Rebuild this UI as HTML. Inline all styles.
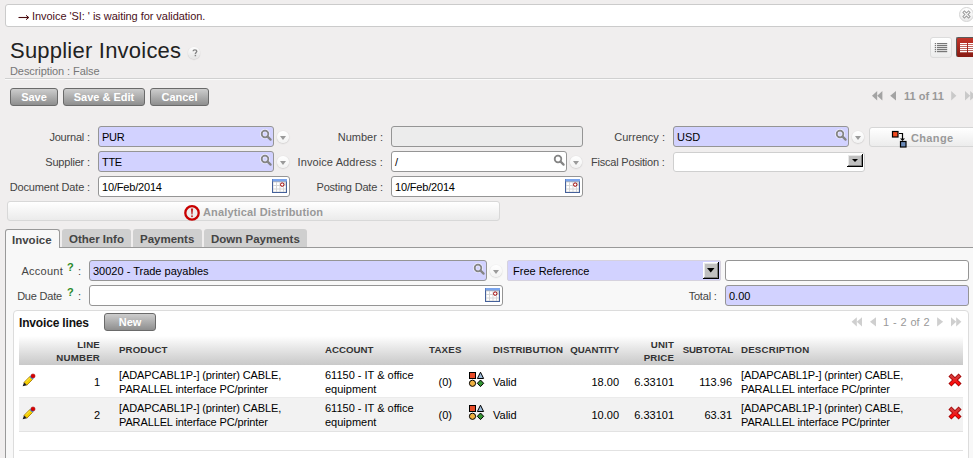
<!DOCTYPE html>
<html><head><meta charset="utf-8">
<style>
*{box-sizing:border-box;margin:0;padding:0}
html,body{width:973px;height:458px;overflow:hidden;background:#f0eeee;font-family:"Liberation Sans",sans-serif;color:#000}
.a{position:absolute}
.t11{font-size:11px;line-height:13px;white-space:nowrap}
.t12{font-size:12px;line-height:14px;white-space:nowrap}
.lbl{color:#444;text-align:right}
.inp{position:absolute;height:21px;border:1px solid #959595;border-radius:3px;background:#fff}
.req{background:#d2d2ff}
.ro{background:#ececec}
.btn{position:absolute;height:18px;border:1px solid #6a6a6a;border-radius:3px;background:linear-gradient(#cdcdcd,#8e8e8e);color:#fff;font-weight:bold;font-size:11px;line-height:16px;text-align:center}
.dd{position:absolute;width:12px;height:12px;border-radius:50%;background:linear-gradient(#ffffff,#f2f2f2);box-shadow:0 0.5px 1.5px rgba(0,0,0,0.22)}
.dd:after{content:"";position:absolute;left:3px;top:4.5px;border-left:3px solid transparent;border-right:3px solid transparent;border-top:4px solid #9a9a9a}
.tab{position:absolute;top:229px;height:18px;background:#cfcfcf;border-radius:3px 3px 0 0;color:#444;font-weight:bold;font-size:11.5px;line-height:20px;padding-left:7px;white-space:nowrap}
.hd{position:absolute;font-weight:bold;font-size:9.7px;line-height:12.3px;color:#333;white-space:nowrap}
.cell{position:absolute;font-size:11px;line-height:13.5px;white-space:nowrap}
</style></head><body>

<!-- notification -->
<div class="a" style="left:5px;top:4px;width:980px;height:23px;background:#fff;border:1px solid #cbcbcb;border-radius:3px"></div>
<div class="a t11" style="left:32px;top:10px;color:#4a1020;letter-spacing:-0.05px">Invoice 'SI: ' is waiting for validation.</div>
<div class="a" style="left:959px;top:7px;width:15px;height:15px;border-radius:50%;border:1px solid #d4d4d4;background:linear-gradient(#fff,#eaeaea)"></div>

<!-- title -->
<div class="a" style="left:10px;top:38px;font-size:22px;line-height:26px;color:#222;white-space:nowrap;letter-spacing:0.22px">Supplier Invoices</div>
<div class="a" style="left:188px;top:47px;width:12px;height:12px;border-radius:50%;background:linear-gradient(#fdfdfd,#e4e4e4);box-shadow:0 0.5px 1.2px rgba(0,0,0,0.2)"></div><svg class="a" style="left:191.5px;top:48.6px" width="6" height="8" viewBox="0 0 7 9"><path d="M1.3 2.6C1.3 1.2 2.2 0.8 3.4 0.8C4.7 0.8 5.6 1.5 5.6 2.6C5.6 3.9 3.9 4 3.9 5.6" fill="none" stroke="#858585" stroke-width="1.6"/><rect x="3.1" y="6.6" width="1.7" height="1.7" fill="#858585"/></svg>
<div class="a t11" style="left:10px;top:65px;color:#777;letter-spacing:-0.08px">Description : False</div>
<div class="a" style="left:5px;top:78px;width:968px;height:1px;background:#d0d0d0"></div><div class="a" style="left:5px;top:79px;width:968px;height:1px;background:#fafafa"></div>

<!-- view switch -->
<div class="a" style="left:930px;top:37px;width:22px;height:21px;border:1px solid #dcdcdc;border-radius:3px;background:linear-gradient(#fff,#ececec)"></div>
<div class="a" style="left:956px;top:37px;width:20px;height:20px;border-radius:2px;background:linear-gradient(#c4352a,#861a12);border-left:1px solid #5a5a5a;border-top:1px solid #5a5a5a"></div>

<!-- buttons -->
<div class="btn" style="left:10px;top:88px;width:48px">Save</div>
<div class="btn" style="left:63px;top:88px;width:82px">Save &amp; Edit</div>
<div class="btn" style="left:150px;top:88px;width:59px">Cancel</div>

<!-- pager -->
<div class="a t11" style="left:904px;top:90px;color:#999;font-weight:bold">11 of 11</div>

<!-- row 1 -->
<div class="a t11 lbl" style="left:0;width:89.8px;top:131px;letter-spacing:-0.2px">Journal :</div>
<div class="inp req" style="left:98px;top:126px;width:176px"></div>
<div class="a t11" style="left:102px;top:131px;letter-spacing:-0.3px">PUR</div>
<div class="dd" style="left:277px;top:131px"></div>
<div class="a t11 lbl" style="left:290px;width:93px;top:131px">Number :</div>
<div class="inp ro" style="left:391px;top:126px;width:192px"></div>
<div class="a t11 lbl" style="left:580px;width:85px;top:131px">Currency :</div>
<div class="inp req" style="left:673px;top:126px;width:176px"></div>
<div class="a t11" style="left:677px;top:131px">USD</div>
<div class="dd" style="left:852px;top:131px"></div>
<div class="a" style="left:869px;top:127px;width:120px;height:20px;border:1px solid #d6d6d6;border-radius:3px;background:linear-gradient(#fff,#ececec)"></div>
<div class="a t11" style="left:911px;top:132px;color:#999;font-weight:bold;letter-spacing:0.35px">Change</div>

<!-- row 2 -->
<div class="a t11 lbl" style="left:0;width:89.8px;top:156px;letter-spacing:-0.2px">Supplier :</div>
<div class="inp req" style="left:98px;top:151px;width:176px"></div>
<div class="a t11" style="left:102px;top:156px;letter-spacing:-0.3px">TTE</div>
<div class="dd" style="left:277px;top:156px"></div>
<div class="a t11 lbl" style="left:290px;width:93px;top:156px;letter-spacing:0.1px">Invoice Address :</div>
<div class="inp" style="left:391px;top:151px;width:176px"></div>
<div class="a t11" style="left:395px;top:156px">/</div>
<div class="dd" style="left:570px;top:156px"></div>
<div class="a t11 lbl" style="left:580px;width:84.6px;top:156px;letter-spacing:-0.2px">Fiscal Position :</div>
<div class="inp" style="left:673px;top:152px;width:192px;height:20px;border-color:#cfcfcf"></div>

<!-- row 3 -->
<div class="a t11 lbl" style="left:0;width:90px;top:181px;letter-spacing:-0.15px">Document Date :</div>
<div class="inp" style="left:98px;top:176px;width:192px"></div>
<div class="a t11" style="left:102px;top:181px;letter-spacing:-0.18px">10/Feb/2014</div>
<div class="a t11 lbl" style="left:290px;width:92.8px;top:181px;letter-spacing:-0.2px">Posting Date :</div>
<div class="inp" style="left:391px;top:176px;width:192px"></div>
<div class="a t11" style="left:395px;top:181px;letter-spacing:-0.18px">10/Feb/2014</div>

<!-- analytical -->
<div class="a" style="left:7px;top:201px;width:493px;height:20px;border:1px solid #d8d8d8;border-radius:3px;background:linear-gradient(#fff,#ebebeb)"></div>
<svg class="a" style="left:184px;top:205px" width="16" height="16" viewBox="0 0 16 16"><circle cx="8" cy="7.9" r="6.7" fill="#ededed" stroke="#c80000" stroke-width="2.3"/><path d="M6.9 3.6H9.1L8.5 9.6H7.5Z" fill="#c02020"/><rect x="7.2" y="10.4" width="1.6" height="1.7" fill="#c02020"/></svg>
<div class="a t11" style="left:203px;top:206px;color:#999;font-weight:bold;letter-spacing:0.15px">Analytical Distribution</div>

<!-- tabs -->
<div class="a" style="left:5px;top:247px;width:980px;height:220px;background:#f8f8f8;border-left:1px solid #999;border-top:1px solid #999"></div>
<div class="tab" style="left:5px;width:55px;height:19px;background:#f8f8f8;border:1px solid #999;border-bottom:none;line-height:20px;padding-left:6px">Invoice</div>
<div class="tab" style="left:62px;width:69px">Other Info</div>
<div class="tab" style="left:133px;width:69px">Payments</div>
<div class="tab" style="left:204px;width:103px">Down Payments</div>

<!-- account row -->
<div class="a t11 lbl" style="left:0;width:63px;top:265px;letter-spacing:0.25px">Account</div>
<div class="a t11" style="left:67px;top:261px;color:#2a8a2a;font-weight:bold">?</div>
<div class="a t11" style="left:78px;top:265px;color:#444">:</div>
<div class="inp req" style="left:89px;top:260px;width:398px"></div>
<div class="a t11" style="left:93px;top:265px">30020 - Trade payables</div>
<div class="dd" style="left:490px;top:265px"></div>
<div class="inp req" style="left:507px;top:260px;width:214px;border-color:#d6d2de;border-radius:2px"></div>
<div class="a t11" style="left:513px;top:265px">Free Reference</div>
<div class="inp" style="left:725px;top:260px;width:244px"></div>

<div class="a t11 lbl" style="left:0;width:62px;top:290px;letter-spacing:-0.2px">Due Date</div>
<div class="a t11" style="left:67px;top:286px;color:#2a8a2a;font-weight:bold">?</div>
<div class="a t11" style="left:78px;top:290px;color:#444">:</div>
<div class="inp" style="left:89px;top:285px;width:414px"></div>
<div class="a t11 lbl" style="left:650px;width:66.6px;top:290px;letter-spacing:-0.2px">Total :</div>
<div class="inp req" style="left:725px;top:285px;width:244px"></div>
<div class="a t11" style="left:729px;top:290px">0.00</div>

<!-- invoice lines -->
<div class="a" style="left:13px;top:310px;width:956px;height:160px;background:#fff;border:1px solid #dcdcdc;border-radius:4px"></div>
<div class="a t12" style="left:19px;top:316px;font-weight:bold;color:#111;letter-spacing:-0.17px">Invoice lines</div>
<div class="btn" style="left:104px;top:313px;width:52px;height:18px">New</div>
<div class="a t11" style="left:883px;top:316px;color:#999;word-spacing:0.8px">1 - 2 of 2</div>

<div class="a" style="left:19px;top:336px;width:944px;height:29px;background:linear-gradient(#ffffff 0%,#eeeeee 30%,#d8d8d8 70%,#c9c9c9 100%)"></div>
<div class="a" style="left:19px;top:365px;width:944px;height:33px;background:#fff;border-bottom:1px solid #ebebeb"></div>
<div class="a" style="left:19px;top:398px;width:944px;height:34px;background:#f2f2f2;border-bottom:1px solid #e2e2e2"></div>
<div class="a" style="left:19px;top:450px;width:944px;height:1px;background:#e2e2e2"></div>

<!-- icons -->
<svg class="a" style="left:260px;top:129px" width="13" height="13" viewBox="0 0 13 13"><circle cx="5" cy="5" r="3.4" fill="none" stroke="#fff" stroke-width="3.4" opacity="0.6"/><circle cx="5" cy="5" r="3.3" fill="none" stroke="#858585" stroke-width="1.8"/><path d="M7.6 7.6 L10.6 10.6" stroke="#858585" stroke-width="2.2" stroke-linecap="round"/></svg><svg class="a" style="left:260px;top:154px" width="13" height="13" viewBox="0 0 13 13"><circle cx="5" cy="5" r="3.4" fill="none" stroke="#fff" stroke-width="3.4" opacity="0.6"/><circle cx="5" cy="5" r="3.3" fill="none" stroke="#858585" stroke-width="1.8"/><path d="M7.6 7.6 L10.6 10.6" stroke="#858585" stroke-width="2.2" stroke-linecap="round"/></svg><svg class="a" style="left:553px;top:154px" width="13" height="13" viewBox="0 0 13 13"><circle cx="5" cy="5" r="3.4" fill="none" stroke="#fff" stroke-width="3.4" opacity="0.6"/><circle cx="5" cy="5" r="3.3" fill="none" stroke="#858585" stroke-width="1.8"/><path d="M7.6 7.6 L10.6 10.6" stroke="#858585" stroke-width="2.2" stroke-linecap="round"/></svg><svg class="a" style="left:835px;top:129px" width="13" height="13" viewBox="0 0 13 13"><circle cx="5" cy="5" r="3.4" fill="none" stroke="#fff" stroke-width="3.4" opacity="0.6"/><circle cx="5" cy="5" r="3.3" fill="none" stroke="#858585" stroke-width="1.8"/><path d="M7.6 7.6 L10.6 10.6" stroke="#858585" stroke-width="2.2" stroke-linecap="round"/></svg><svg class="a" style="left:473px;top:263px" width="13" height="13" viewBox="0 0 13 13"><circle cx="5" cy="5" r="3.4" fill="none" stroke="#fff" stroke-width="3.4" opacity="0.6"/><circle cx="5" cy="5" r="3.3" fill="none" stroke="#858585" stroke-width="1.8"/><path d="M7.6 7.6 L10.6 10.6" stroke="#858585" stroke-width="2.2" stroke-linecap="round"/></svg><svg class="a" style="left:272px;top:179px" width="15" height="14" viewBox="0 0 15 14"><rect x="0" y="0" width="15" height="14" fill="#44609a"/><rect x="0.5" y="0" width="14.5" height="2.5" fill="#7aa4ec"/><rect x="1" y="2.5" width="13" height="10.5" fill="#d6d6d6"/><path d="M1.5 3.5h2.5v2.5h-2.5zM5 3.5h2.5v2.5h-2.5zM8.5 3.5h2.5v2.5h-2.5zM1.5 7h2.5v2.5h-2.5zM5 7h2.5v2.5h-2.5zM8.5 7h2.5v2.5h-2.5zM12 7h1.5v2.5h-1.5zM1.5 10.5h2.5v2h-2.5zM5 10.5h2.5v2h-2.5zM8.5 10.5h2.5v2h-2.5zM12 10.5h1.5v2h-1.5z" fill="#fff"/><circle cx="10.2" cy="5.6" r="1.7" fill="#fff" stroke="#a00000" stroke-width="1"/></svg><svg class="a" style="left:565px;top:179px" width="15" height="14" viewBox="0 0 15 14"><rect x="0" y="0" width="15" height="14" fill="#44609a"/><rect x="0.5" y="0" width="14.5" height="2.5" fill="#7aa4ec"/><rect x="1" y="2.5" width="13" height="10.5" fill="#d6d6d6"/><path d="M1.5 3.5h2.5v2.5h-2.5zM5 3.5h2.5v2.5h-2.5zM8.5 3.5h2.5v2.5h-2.5zM1.5 7h2.5v2.5h-2.5zM5 7h2.5v2.5h-2.5zM8.5 7h2.5v2.5h-2.5zM12 7h1.5v2.5h-1.5zM1.5 10.5h2.5v2h-2.5zM5 10.5h2.5v2h-2.5zM8.5 10.5h2.5v2h-2.5zM12 10.5h1.5v2h-1.5z" fill="#fff"/><circle cx="10.2" cy="5.6" r="1.7" fill="#fff" stroke="#a00000" stroke-width="1"/></svg><svg class="a" style="left:485px;top:288px" width="15" height="14" viewBox="0 0 15 14"><rect x="0" y="0" width="15" height="14" fill="#44609a"/><rect x="0.5" y="0" width="14.5" height="2.5" fill="#7aa4ec"/><rect x="1" y="2.5" width="13" height="10.5" fill="#d6d6d6"/><path d="M1.5 3.5h2.5v2.5h-2.5zM5 3.5h2.5v2.5h-2.5zM8.5 3.5h2.5v2.5h-2.5zM1.5 7h2.5v2.5h-2.5zM5 7h2.5v2.5h-2.5zM8.5 7h2.5v2.5h-2.5zM12 7h1.5v2.5h-1.5zM1.5 10.5h2.5v2h-2.5zM5 10.5h2.5v2h-2.5zM8.5 10.5h2.5v2h-2.5zM12 10.5h1.5v2h-1.5z" fill="#fff"/><circle cx="10.2" cy="5.6" r="1.7" fill="#fff" stroke="#a00000" stroke-width="1"/></svg><svg class="a" style="left:847px;top:154px" width="16" height="13" viewBox="0 0 16 13"><rect x="0" y="0" width="16" height="13" fill="#000"/><rect x="0" y="0" width="15" height="12" fill="#fff"/><rect x="1" y="1" width="14" height="11" fill="#808080"/><rect x="1" y="1" width="13" height="10" fill="#e8e8e8"/><rect x="2" y="2" width="12" height="9" fill="#c0c0c0"/><path d="M5 5H11L8 8Z" fill="#000"/></svg><svg class="a" style="left:703px;top:262px" width="16" height="17" viewBox="0 0 16 17"><rect x="0" y="0" width="16" height="17" fill="#000"/><rect x="0" y="0" width="15" height="16" fill="#fff"/><rect x="1" y="1" width="14" height="15" fill="#808080"/><rect x="1" y="1" width="13" height="14" fill="#e8e8e8"/><rect x="2" y="2" width="12" height="13" fill="#c0c0c0"/><path d="M4 6H11.5L7.75 10.5Z" fill="#000"/></svg><svg class="a" style="left:891px;top:130px" width="17" height="18" viewBox="0 0 17 18"><rect x="1.5" y="1.5" width="5.5" height="5.5" fill="#f04a20" stroke="#000" stroke-width="1.2"/><path d="M8 3.5H11.5V9" fill="none" stroke="#000" stroke-width="1.2"/><path d="M9 8.5H14L11.5 11Z" fill="#000"/><rect x="9.5" y="11.5" width="5.5" height="5.5" fill="#6a8ab8" stroke="#000" stroke-width="1.2"/></svg><svg class="a" style="left:18px;top:13px" width="12" height="8" viewBox="0 0 12 8"><path d="M0.5 4.5H10.5" stroke="#4a0c10" stroke-width="1.1"/><path d="M8 2.3L10.8 4.5L8 6.7" fill="none" stroke="#4a0c10" stroke-width="1"/></svg><svg class="a" style="left:0;top:0" width="973" height="458"><path d="M872 95.8L877.2 91V100.6Z" fill="#a3a3a3"/><path d="M877.2 95.8L882.4000000000001 91V100.6Z" fill="#a3a3a3"/><path d="M890.2 95.8L896.0 91V100.6Z" fill="#a3a3a3"/><path d="M956.4000000000001 95.8L951.2 91V100.6Z" fill="#c9c9c9"/><path d="M970.2 95.8L965 91V100.6Z" fill="#c9c9c9"/><path d="M975.4000000000001 95.8L970.2 91V100.6Z" fill="#c9c9c9"/><path d="M851.6 321.8L856.8000000000001 317.2V326.4Z" fill="#cfcfcf"/><path d="M856.8 321.8L862.0 317.2V326.4Z" fill="#cfcfcf"/><path d="M870 321.8L876 317.2V326.4Z" fill="#cfcfcf"/><path d="M943.1 321.8L937.1 317.2V326.4Z" fill="#cfcfcf"/><path d="M956.2 321.8L951 317.2V326.4Z" fill="#cfcfcf"/><path d="M961.4000000000001 321.8L956.2 317.2V326.4Z" fill="#cfcfcf"/></svg><svg class="a" style="left:962px;top:10px" width="9" height="9" viewBox="0 0 9 9"><path d="M2.4 2.4L6.6 6.6M6.6 2.4L2.4 6.6" stroke="#959595" stroke-width="3" stroke-linecap="square"/><path d="M2.4 2.4L6.6 6.6M6.6 2.4L2.4 6.6" stroke="#f6f6f6" stroke-width="1.3" stroke-linecap="square"/></svg><svg class="a" style="left:934px;top:42px" width="14" height="11" viewBox="0 0 14 11"><rect x="0.8" y="1" width="1.3" height="1.2" fill="#777"/><rect x="3" y="1" width="10.2" height="1.2" fill="#777"/><rect x="0.8" y="3" width="1.3" height="1.2" fill="#777"/><rect x="3" y="3" width="10.2" height="1.2" fill="#777"/><rect x="0.8" y="5" width="1.3" height="1.2" fill="#777"/><rect x="3" y="5" width="10.2" height="1.2" fill="#777"/><rect x="0.8" y="7" width="1.3" height="1.2" fill="#777"/><rect x="3" y="7" width="10.2" height="1.2" fill="#777"/><rect x="0.8" y="9" width="1.3" height="1.2" fill="#777"/><rect x="3" y="9" width="10.2" height="1.2" fill="#777"/></svg><svg class="a" style="left:959px;top:42px" width="14" height="11" viewBox="0 0 14 11"><rect x="1" y="1" width="7" height="1.3" fill="#fff"/><rect x="9" y="1" width="5" height="1.3" fill="#fff"/><rect x="1" y="3" width="7" height="1.3" fill="#fff"/><rect x="9" y="3" width="5" height="1.3" fill="#fff"/><rect x="1" y="5" width="7" height="1.3" fill="#fff"/><rect x="9" y="5" width="5" height="1.3" fill="#fff"/><rect x="1" y="7" width="7" height="1.3" fill="#fff"/><rect x="9" y="7" width="5" height="1.3" fill="#fff"/><rect x="1" y="9" width="7" height="1.3" fill="#fff"/><rect x="9" y="9" width="5" height="1.3" fill="#fff"/></svg>
<!-- table content -->
<div class="hd" style="left:19px;width:81px;top:337.5px;text-align:right;line-height:13px;letter-spacing:0.2px">LINE<br>NUMBER</div>
<div class="hd" style="left:119px;width:200px;top:344px;text-align:left;letter-spacing:0.1px">PRODUCT</div>
<div class="hd" style="left:325px;width:100px;top:344px;text-align:left">ACCOUNT</div>
<div class="hd" style="left:429px;width:60px;top:344px;text-align:left;letter-spacing:0.2px">TAXES</div>
<div class="hd" style="left:493px;width:75px;top:344px;text-align:left;letter-spacing:0.1px">DISTRIBUTION</div>
<div class="hd" style="left:560px;width:59px;top:344px;text-align:right;letter-spacing:-0.1px">QUANTITY</div>
<div class="hd" style="left:620px;width:54px;top:337.5px;text-align:right;line-height:13px;letter-spacing:0.15px">UNIT<br>PRICE</div>
<div class="hd" style="left:681px;width:52px;top:344px;text-align:right;letter-spacing:-0.2px">SUBTOTAL</div>
<div class="hd" style="left:741px;width:120px;top:344px;text-align:left;letter-spacing:0.2px">DESCRIPTION</div>
<svg class="a" style="left:22px;top:373px" width="14" height="14" viewBox="0 0 14 14"><path d="M2 9.4 L7.8 3.6 L10.6 6.4 L4.8 12.2 Z" fill="#f5d000" stroke="#a07000" stroke-width="0.8" stroke-linejoin="round"/><path d="M4 8.6 L8 4.6" stroke="#fff060" stroke-width="0.9"/><path d="M0.7 13.3 L2 9.4 L4.8 12.2 Z" fill="#151515"/><path d="M7.6 3.8 L9.2 2.2 L12 5 L10.4 6.6 Z" fill="#40a0f0"/><circle cx="11" cy="3" r="2.1" fill="#d80000" stroke="#a00000" stroke-width="0.5"/></svg>
<div class="cell" style="left:40px;width:60px;top:376px;text-align:right">1</div>
<div class="cell" style="left:119px;top:369px;letter-spacing:-0.12px">[ADAPCABL1P-] (printer) CABLE,<br>PARALLEL interface PC/printer</div>
<div class="cell" style="left:325px;top:369px">61150 - IT &amp; office<br>equipment</div>
<div class="cell" style="left:400px;width:52px;top:376px;text-align:right">(0)</div>
<svg class="a" style="left:468px;top:371px" width="17" height="16" viewBox="0 0 17 16"><rect x="1.5" y="1.5" width="6" height="6" fill="#e84c28" stroke="#000" stroke-width="1"/><path d="M12.5 1.2 L15.6 7.5 L9.4 7.5 Z" fill="#9cbad8" stroke="#000" stroke-width="1" stroke-linejoin="round"/><circle cx="4.5" cy="12.3" r="3.1" fill="#f0b040" stroke="#000" stroke-width="1"/><path d="M12.5 9 L15.7 12.3 L12.5 15.6 L9.3 12.3 Z" fill="#339433" stroke="#000" stroke-width="1" stroke-linejoin="round"/></svg>
<div class="cell" style="left:493px;top:376px">Valid</div>
<div class="cell" style="left:560px;width:59px;top:376px;text-align:right">18.00</div>
<div class="cell" style="left:620px;width:54px;top:376px;text-align:right">6.33101</div>
<div class="cell" style="left:680px;width:52px;top:376px;text-align:right">113.96</div>
<div class="cell" style="left:741px;top:369px;letter-spacing:-0.12px">[ADAPCABL1P-] (printer) CABLE,<br>PARALLEL interface PC/printer</div>
<svg class="a" style="left:948px;top:373px" width="14" height="14" viewBox="0 0 14 14"><defs><linearGradient id="xg1" x1="0" y1="0" x2="0" y2="1"><stop offset="0" stop-color="#d23c3c"/><stop offset="1" stop-color="#ff0a0a"/></linearGradient></defs><path d="M3.4 3.4L10.6 10.6M10.6 3.4L3.4 10.6" stroke="#a00000" stroke-width="4.2" stroke-linecap="square"/><path d="M3.4 3.4L10.6 10.6M10.6 3.4L3.4 10.6" stroke="url(#xg1)" stroke-width="2.6" stroke-linecap="square"/></svg>
<svg class="a" style="left:22px;top:406px" width="14" height="14" viewBox="0 0 14 14"><path d="M2 9.4 L7.8 3.6 L10.6 6.4 L4.8 12.2 Z" fill="#f5d000" stroke="#a07000" stroke-width="0.8" stroke-linejoin="round"/><path d="M4 8.6 L8 4.6" stroke="#fff060" stroke-width="0.9"/><path d="M0.7 13.3 L2 9.4 L4.8 12.2 Z" fill="#151515"/><path d="M7.6 3.8 L9.2 2.2 L12 5 L10.4 6.6 Z" fill="#40a0f0"/><circle cx="11" cy="3" r="2.1" fill="#d80000" stroke="#a00000" stroke-width="0.5"/></svg>
<div class="cell" style="left:40px;width:60px;top:409px;text-align:right">2</div>
<div class="cell" style="left:119px;top:402px;letter-spacing:-0.12px">[ADAPCABL1P-] (printer) CABLE,<br>PARALLEL interface PC/printer</div>
<div class="cell" style="left:325px;top:402px">61150 - IT &amp; office<br>equipment</div>
<div class="cell" style="left:400px;width:52px;top:409px;text-align:right">(0)</div>
<svg class="a" style="left:468px;top:404px" width="17" height="16" viewBox="0 0 17 16"><rect x="1.5" y="1.5" width="6" height="6" fill="#e84c28" stroke="#000" stroke-width="1"/><path d="M12.5 1.2 L15.6 7.5 L9.4 7.5 Z" fill="#9cbad8" stroke="#000" stroke-width="1" stroke-linejoin="round"/><circle cx="4.5" cy="12.3" r="3.1" fill="#f0b040" stroke="#000" stroke-width="1"/><path d="M12.5 9 L15.7 12.3 L12.5 15.6 L9.3 12.3 Z" fill="#339433" stroke="#000" stroke-width="1" stroke-linejoin="round"/></svg>
<div class="cell" style="left:493px;top:409px">Valid</div>
<div class="cell" style="left:560px;width:59px;top:409px;text-align:right">10.00</div>
<div class="cell" style="left:620px;width:54px;top:409px;text-align:right">6.33101</div>
<div class="cell" style="left:680px;width:52px;top:409px;text-align:right">63.31</div>
<div class="cell" style="left:741px;top:402px;letter-spacing:-0.12px">[ADAPCABL1P-] (printer) CABLE,<br>PARALLEL interface PC/printer</div>
<svg class="a" style="left:948px;top:406px" width="14" height="14" viewBox="0 0 14 14"><defs><linearGradient id="xg2" x1="0" y1="0" x2="0" y2="1"><stop offset="0" stop-color="#d23c3c"/><stop offset="1" stop-color="#ff0a0a"/></linearGradient></defs><path d="M3.4 3.4L10.6 10.6M10.6 3.4L3.4 10.6" stroke="#a00000" stroke-width="4.2" stroke-linecap="square"/><path d="M3.4 3.4L10.6 10.6M10.6 3.4L3.4 10.6" stroke="url(#xg2)" stroke-width="2.6" stroke-linecap="square"/></svg>
</body></html>
